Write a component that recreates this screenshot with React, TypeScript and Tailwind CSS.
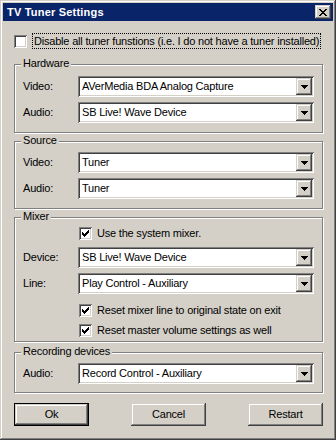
import React from 'react';

const raised =
  'shadow-[inset_-1px_-1px_0_#404040,inset_1px_1px_0_#d4d0c8,inset_-2px_-2px_0_#808080,inset_2px_2px_0_#ffffff]';
const sunken =
  'shadow-[inset_1px_1px_0_#808080,inset_-1px_-1px_0_#ffffff,inset_2px_2px_0_#404040,inset_-2px_-2px_0_#d4d0c8]';

const CheckMark = () => (
  <svg width="7" height="7" viewBox="0 0 7 7" shapeRendering="crispEdges">
    <path d="M6 0h1v3h-1zM5 1h1v3h-1zM4 2h1v3h-1zM0 2h1v3h-1zM1 3h1v3h-1zM2 4h1v3h-1zM3 3h1v3h-1z" fill="#000" />
  </svg>
);

const Checkbox = ({ checked }: { checked?: boolean }) => (
  <div className={`w-[13px] h-[13px] shrink-0 bg-white flex items-center justify-center ${sunken}`}>
    {checked && <CheckMark />}
  </div>
);

const Arrow = () => (
  <svg width="7" height="4" viewBox="0 0 7 4" shapeRendering="crispEdges">
    <path d="M0 0h7v1h-7zM1 1h5v1h-5zM2 2h3v1h-3zM3 3h1v1h-1z" fill="#000" />
  </svg>
);

const Combo = ({ value }: { value: string }) => (
  <div className={`w-[236px] h-[21px] bg-white p-[2px] flex items-center ${sunken}`}>
    <span className="flex-1 pl-[2px] leading-[13px] whitespace-nowrap">{value}</span>
    <div className={`w-[16px] h-[17px] bg-[#d4d0c8] flex items-center justify-center ${raised}`}>
      <Arrow />
    </div>
  </div>
);

const Row = ({ label, value }: { label: string; value: string }) => (
  <div className="flex items-center">
    <span className="w-[55px] leading-[13px]">{label}</span>
    <Combo value={value} />
  </div>
);

const Group = ({
  title,
  className,
  children,
}: {
  title: string;
  className: string;
  children: React.ReactNode;
}) => (
  <div
    className={`relative border border-[#808080] shadow-[1px_1px_0_#ffffff,inset_1px_1px_0_#ffffff] pl-[8px] pr-[8px] ${className}`}
  >
    <span className="absolute left-[6px] top-[-8px] px-[2px] bg-[#d4d0c8] leading-[13px]">{title}</span>
    {children}
  </div>
);

const CheckRow = ({ label }: { label: string }) => (
  <div className="flex items-center h-[13px] pl-[56px]">
    <Checkbox checked />
    <span className="ml-[5px] leading-[13px] whitespace-nowrap">{label}</span>
  </div>
);

const Button = ({ label, isDefault }: { label: string; isDefault?: boolean }) =>
  isDefault ? (
    <div className="w-[75px] h-[23px] border border-black">
      <div className={`w-full h-full bg-[#d4d0c8] flex items-center justify-center ${raised}`}>{label}</div>
    </div>
  ) : (
    <div className={`w-[75px] h-[23px] bg-[#d4d0c8] flex items-center justify-center ${raised}`}>{label}</div>
  );

export default function App() {
  return (
    <div
      className={`w-[336px] h-[440px] bg-[#d4d0c8] p-[3px] text-[11px] tracking-[-0.2px] text-black ${raised}`}
      style={{ fontFamily: '"Liberation Sans", Arial, sans-serif' }}
    >
      <div className="h-[18px] bg-[#0a246a] flex items-center justify-between pl-[4px] pr-[2px]">
        <span className="text-white font-bold text-[11px] tracking-[0.2px] leading-[13px]">TV Tuner Settings</span>
        <div className={`w-[16px] h-[14px] bg-[#d4d0c8] flex items-center justify-center ${raised}`}>
          <svg width="8" height="7" viewBox="0 0 8 7" shapeRendering="crispEdges">
            <path
              d="M0 0h2v1h-2zM6 0h2v1h-2zM1 1h2v1h-2zM5 1h2v1h-2zM2 2h4v1h-4zM3 3h2v1h-2zM2 4h4v1h-4zM1 5h2v1h-2zM5 5h2v1h-2zM0 6h2v1h-2zM6 6h2v1h-2z"
              fill="#000"
            />
          </svg>
        </div>
      </div>

      <div className="pl-[11px] pr-[10px]">
        <div className="flex items-center mt-[11px] h-[18px]">
          <Checkbox />
          <span className="ml-[5px] px-[1px] border border-dotted border-black leading-[14px] whitespace-nowrap">
            Disable all tuner funstions (i.e. I do not have a tuner installed)
          </span>
        </div>

        <Group title="Hardware" className="mt-[14px] pt-[11px] pb-[9px]">
          <div className="flex flex-col gap-[5px]">
            <Row label="Video:" value="AVerMedia BDA Analog Capture" />
            <Row label="Audio:" value="SB Live! Wave Device" />
          </div>
        </Group>

        <Group title="Source" className="mt-[8px] pt-[10px] pb-[9px]">
          <div className="flex flex-col gap-[5px]">
            <Row label="Video:" value="Tuner" />
            <Row label="Audio:" value="Tuner" />
          </div>
        </Group>

        <Group title="Mixer" className="mt-[8px] pt-[9px] pb-[4px]">
          <CheckRow label="Use the system mixer." />
          <div className="flex flex-col gap-[5px] mt-[7px]">
            <Row label="Device:" value="SB Live! Wave Device" />
            <Row label="Line:" value="Play Control - Auxiliary" />
          </div>
          <div className="mt-[10px] flex flex-col gap-[7px]">
            <CheckRow label="Reset mixer line to original state on exit" />
            <CheckRow label="Reset master volume settings as well" />
          </div>
        </Group>

        <Group title="Recording devices" className="mt-[10px] pt-[10px] pb-[8px]">
          <Row label="Audio:" value="Record Control - Auxiliary" />
        </Group>

        <div className="mt-[10px] flex justify-between">
          <Button label="Ok" isDefault />
          <Button label="Cancel" />
          <Button label="Restart" />
        </div>
      </div>
    </div>
  );
}
